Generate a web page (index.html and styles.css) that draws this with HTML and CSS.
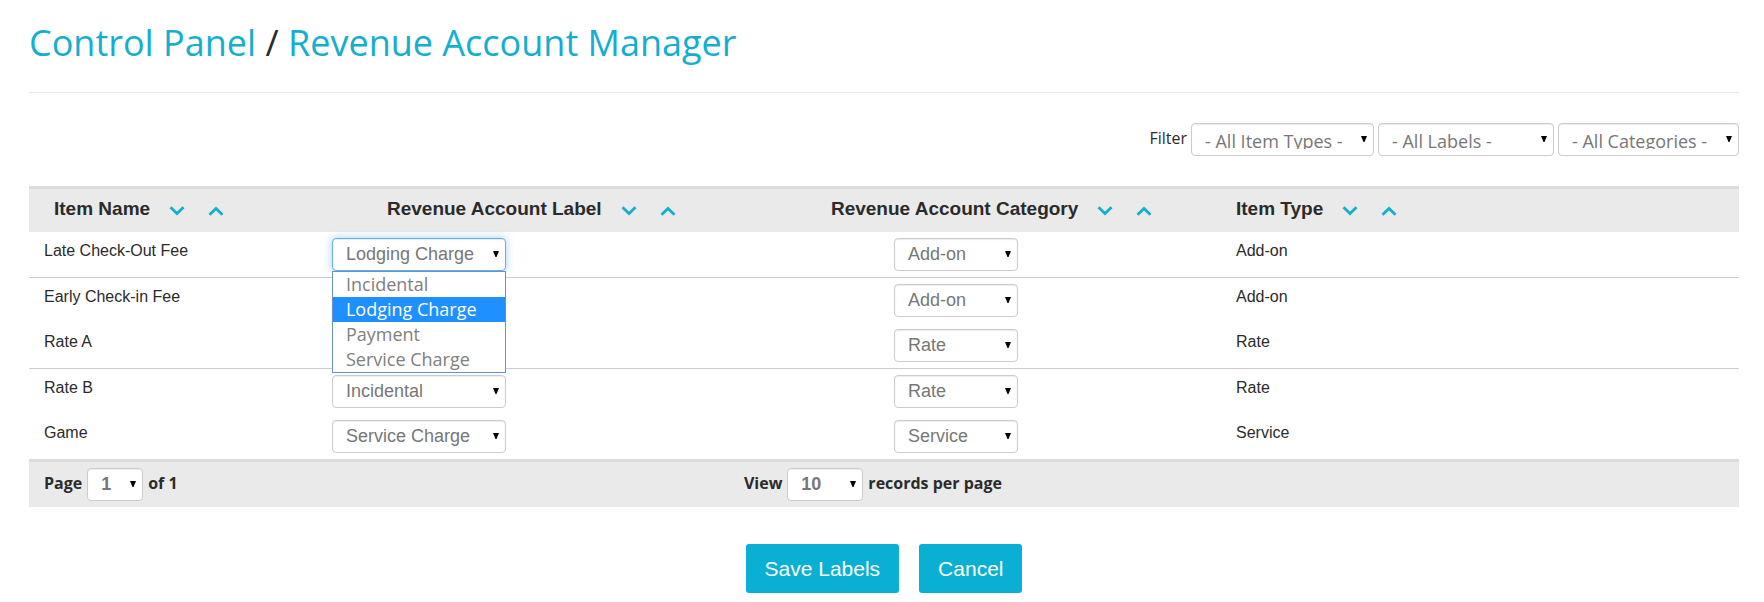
FILE: index.html
```html
<!DOCTYPE html>
<html lang="en">
<head>
<meta charset="utf-8">
<title>Revenue Account Manager</title>
<link rel="stylesheet" href="styles.css">
</head>
<body>
<svg class="sprite" aria-hidden="true">
  <symbol id="down" viewBox="0 0 16 10"><path d="M1.5 1.3 8 7.5l6.500-6.200" fill="none" stroke="currentColor" stroke-width="2.800"/></symbol>
  <symbol id="up" viewBox="0 0 16 10"><path d="M1.500 8.700 8 2.500l6.500 6.200" fill="none" stroke="currentColor" stroke-width="2.800"/></symbol>
</svg>
<main class="page">
  <h1 class="title"><a href="#">Control Panel</a> / <a href="#">Revenue Account Manager</a></h1>
  <form>
    <div class="filters">
      <span class="filter-label">Filter</span>
      <select class="select filter-types" aria-label="Filter by item type"><option>- All Item Types -</option></select>
      <select class="select filter-labels" aria-label="Filter by label"><option>- All Labels -</option></select>
      <select class="select filter-categories" aria-label="Filter by category"><option>- All Categories -</option></select>
    </div>
    <table class="items">
      <colgroup><col class="col-name"><col class="col-label"><col class="col-category"><col class="col-type"></colgroup>
      <thead>
        <tr>
          <th class="head-name"><div class="head">Item Name <button type="button" class="sort" aria-label="Sort item name descending"><svg><use href="#down"/></svg></button><button type="button" class="sort" aria-label="Sort item name ascending"><svg><use href="#up"/></svg></button></div></th>
          <th class="head-label"><div class="head">Revenue Account Label <button type="button" class="sort" aria-label="Sort label descending"><svg><use href="#down"/></svg></button><button type="button" class="sort" aria-label="Sort label ascending"><svg><use href="#up"/></svg></button></div></th>
          <th class="head-category"><div class="head">Revenue Account Category <button type="button" class="sort" aria-label="Sort category descending"><svg><use href="#down"/></svg></button><button type="button" class="sort" aria-label="Sort category ascending"><svg><use href="#up"/></svg></button></div></th>
          <th class="head-type"><div class="head">Item Type <button type="button" class="sort" aria-label="Sort item type descending"><svg><use href="#down"/></svg></button><button type="button" class="sort" aria-label="Sort item type ascending"><svg><use href="#up"/></svg></button></div></th>
        </tr>
      </thead>
      <tbody>
        <tr class="ruled">
          <td><div class="text">Late Check-Out Fee</div></td>
          <td>
            <div class="dropdown">
              <select class="select label-select open" aria-label="Label for Late Check-Out Fee"><option>Incidental</option><option selected>Lodging Charge</option><option>Payment</option><option>Service Charge</option></select>
              <ul class="menu" role="listbox" aria-label="Labels">
                <li role="option">Incidental</li>
                <li role="option" class="active" aria-selected="true">Lodging Charge</li>
                <li role="option">Payment</li>
                <li role="option">Service Charge</li>
              </ul>
            </div>
          </td>
          <td class="category"><select class="select category-select" aria-label="Category for Late Check-Out Fee"><option>Add-on</option><option>Rate</option><option>Service</option></select></td>
          <td><div class="text">Add-on</div></td>
        </tr>
        <tr>
          <td><div class="text">Early Check-in Fee</div></td>
          <td></td>
          <td class="category"><select class="select category-select" aria-label="Category for Early Check-in Fee"><option>Add-on</option><option>Rate</option><option>Service</option></select></td>
          <td><div class="text">Add-on</div></td>
        </tr>
        <tr class="ruled">
          <td><div class="text">Rate A</div></td>
          <td></td>
          <td class="category"><select class="select category-select" aria-label="Category for Rate A"><option>Add-on</option><option selected>Rate</option><option>Service</option></select></td>
          <td><div class="text">Rate</div></td>
        </tr>
        <tr>
          <td><div class="text">Rate B</div></td>
          <td><select class="select label-select" aria-label="Label for Rate B"><option>Incidental</option><option>Lodging Charge</option><option>Payment</option><option>Service Charge</option></select></td>
          <td class="category"><select class="select category-select" aria-label="Category for Rate B"><option>Add-on</option><option selected>Rate</option><option>Service</option></select></td>
          <td><div class="text">Rate</div></td>
        </tr>
        <tr>
          <td><div class="text">Game</div></td>
          <td><select class="select label-select" aria-label="Label for Game"><option>Incidental</option><option>Lodging Charge</option><option>Payment</option><option selected>Service Charge</option></select></td>
          <td class="category"><select class="select category-select" aria-label="Category for Game"><option>Add-on</option><option>Rate</option><option selected>Service</option></select></td>
          <td><div class="text">Service</div></td>
        </tr>
      </tbody>
      <tfoot>
        <tr>
          <td colspan="2"><div class="pager"><label for="page">Page</label><select id="page" class="select page-select"><option>1</option></select><span>of 1</span></div></td>
          <td colspan="2" class="view"><div class="pager"><label for="view">View</label><select id="view" class="select view-select"><option>10</option></select><span>records per page</span></div></td>
        </tr>
      </tfoot>
    </table>
    <div class="actions">
      <button type="submit" class="button">Save Labels</button>
      <button type="button" class="button">Cancel</button>
    </div>
  </form>
</main>
</body>
</html>
```
FILE: styles.css
```css
* {
  box-sizing: border-box;
}

body {
  margin: 0;
  background: #fff;
  color: #2b2b2b;
  font: 16px/24px "Open Sans", sans-serif;
}

.sprite {
  display: none;
}

.page {
  padding: 19px 25px 8px 29px;
}

.title {
  margin: 0;
  padding-bottom: 25px;
  border-bottom: 1px solid #e8e8e8;
  font-size: 36px;
  font-weight: 400;
  line-height: 48px;
}

.title a {
  color: #14aed1;
  text-decoration: none;
}

.filters {
  display: flex;
  justify-content: flex-end;
  gap: 4px;
  margin: 30px 0;
}

.filter-label {
  padding-top: 3px;
}

.select {
  appearance: none;
  display: block;
  height: 33px;
  margin: 0;
  padding: 6px 13px;
  border: 1px solid #ccc;
  border-radius: 4px;
  background: #fff url("data:image/svg+xml,%3Csvg xmlns='http://www.w3.org/2000/svg' width='6' height='6'%3E%3Cpath d='M0 0h6L3.5 6h-1z'/%3E%3C/svg%3E") no-repeat right 6px top 12px;
  box-shadow: inset 0 1px 1px rgba(0, 0, 0, 0.08);
  color: #777;
  font: 18px/19px "Liberation Sans", Arial, sans-serif;
}

.filters .select {
  padding: 8px 13px 6px;
  font-family: "Open Sans", sans-serif;
}

.filter-types {
  width: 183px;
}

.filter-labels {
  width: 176px;
}

.filter-categories {
  width: 181px;
}

.items {
  width: 100%;
  border-collapse: separate;
  border-spacing: 0;
  table-layout: fixed;
  font-family: "Liberation Sans", Arial, sans-serif;
}

.col-name {
  width: 16.84%;
}

.col-label {
  width: 21.87%;
}

.col-category {
  width: 31%;
}

.items th {
  height: 46px;
  padding: 0 15px 3px;
  border-top: 3px solid #dcdcdc;
  background: #eaeaea;
  font-size: 19px;
  font-weight: 700;
  text-align: left;
}

.items .head-name {
  padding-left: 25px;
}

.items .head-label {
  padding-left: 70px;
}

.items .head-category {
  padding-left: 140px;
}

.head {
  display: flex;
  align-items: center;
  white-space: nowrap;
}

.sort {
  display: flex;
  width: 16px;
  margin: 4px 0 0 19px;
  padding: 0;
  border: 0;
  background: none;
  color: #14aed1;
}

.sort + .sort {
  margin-left: 23px;
}

.sort svg {
  width: 16px;
  height: 10px;
}

.items td {
  height: 45px;
  padding: 6px 15px;
  vertical-align: top;
}

.items .ruled td {
  height: 46px;
  border-bottom: 1px solid #ccc;
}

.text {
  line-height: 26px;
}

.category .select {
  margin: 0 auto;
}

.label-select {
  width: 174px;
}

.category-select {
  width: 124px;
}

.dropdown {
  position: relative;
  width: 174px;
}

.open {
  border-color: #66afe9;
  box-shadow: inset 0 1px 1px rgba(0, 0, 0, 0.08), 0 0 8px rgba(102, 175, 233, 0.6);
}

.menu {
  position: absolute;
  top: 100%;
  left: 0;
  z-index: 1;
  width: 100%;
  margin: 0;
  padding: 0;
  border: 1px solid #6791d3;
  background: #fff;
  color: #808080;
  font: 18px/25px "Open Sans", sans-serif;
  list-style: none;
}

.menu li {
  padding: 0 13px;
}

.menu .active {
  background: #1e90ff;
  color: #fff;
}

.items tfoot td {
  height: 48px;
  border-top: 3px solid #dcdcdc;
  background: #eaeaea;
}

.items .view {
  padding-left: 53px;
}

.pager {
  display: flex;
  gap: 5px;
  font: 700 16px/30px "Open Sans", sans-serif;
}

.pager .select {
  font-weight: 700;
}

.page-select {
  width: 56px;
}

.view-select {
  width: 76px;
}

.actions {
  display: flex;
  justify-content: center;
  gap: 20px;
  margin-top: 37px;
}

.button {
  padding: 13px 19px 12px;
  border: 0;
  border-radius: 3px;
  background: #0ab0d4;
  color: #fff;
  font: 21px/24px "Liberation Sans", Arial, sans-serif;
}
```
